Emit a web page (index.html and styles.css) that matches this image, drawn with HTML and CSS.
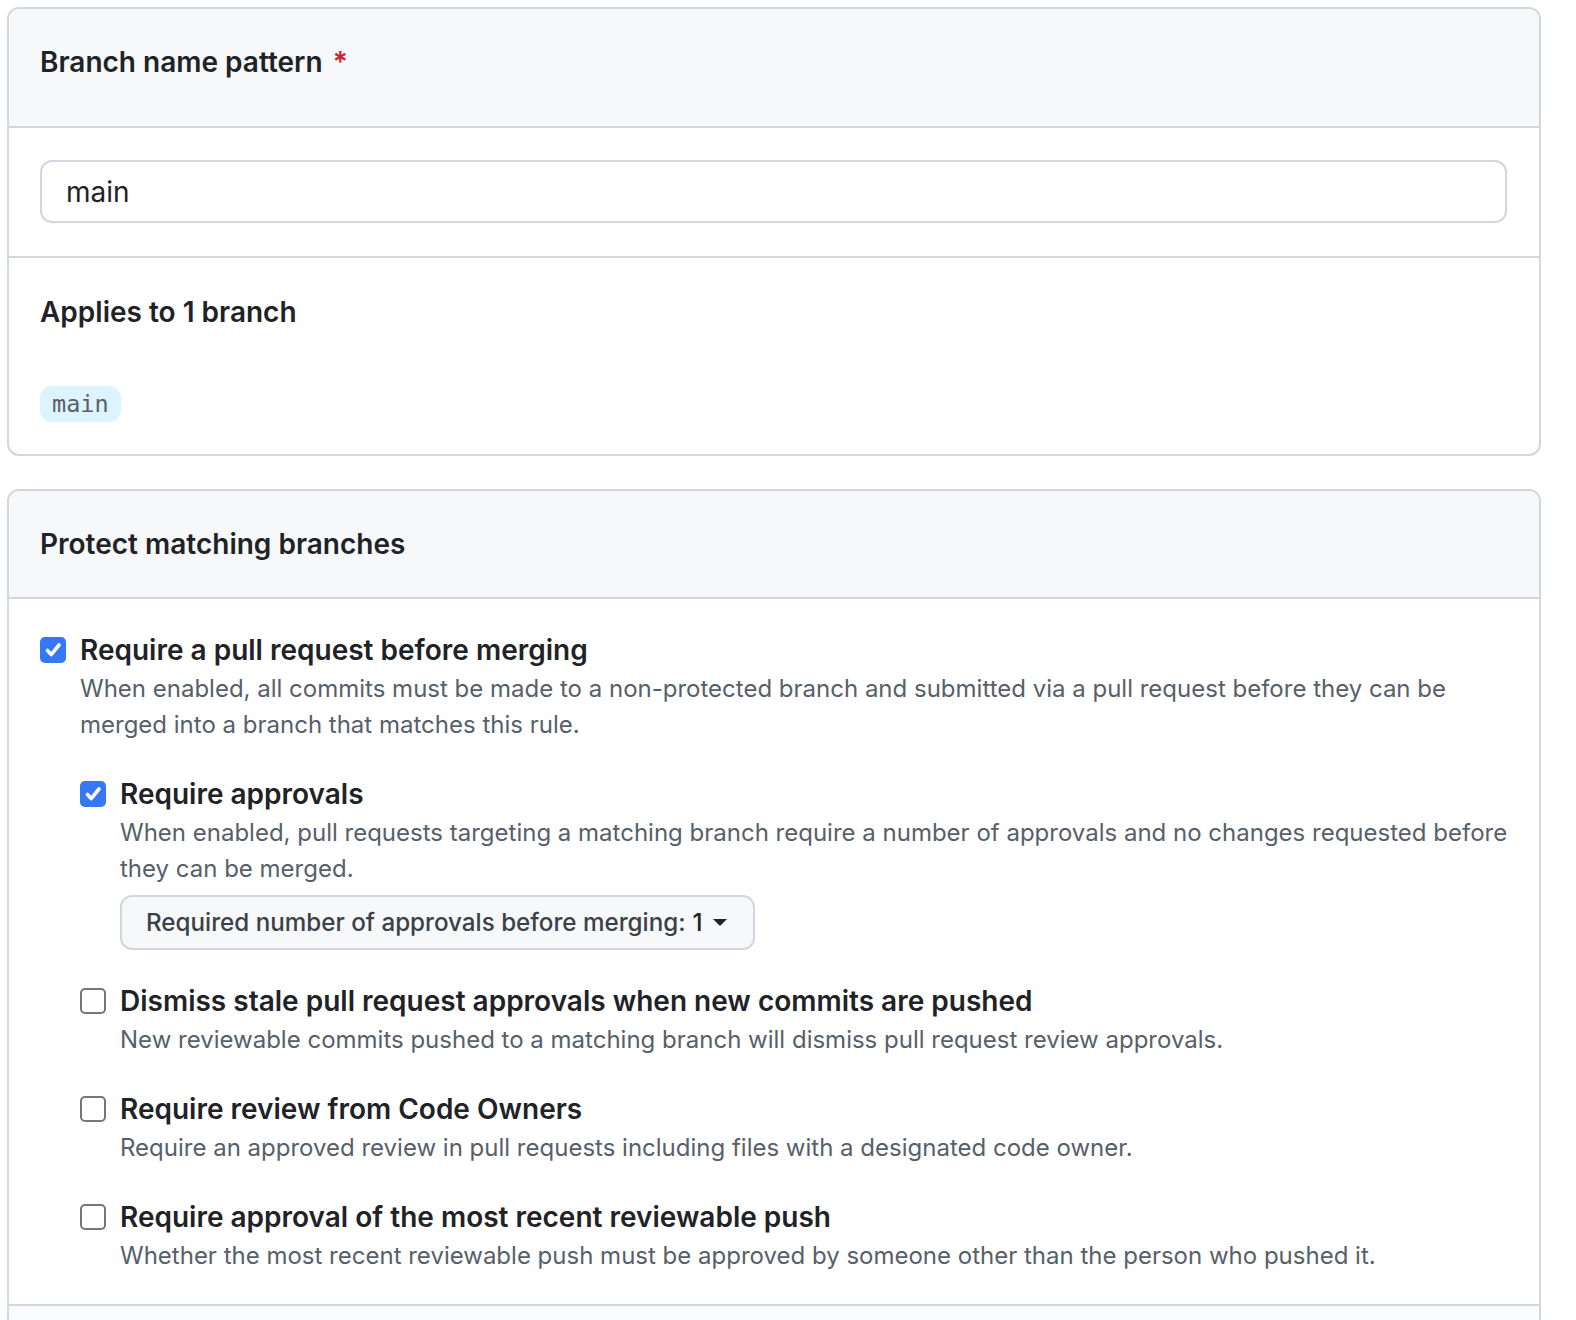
FILE: index.html
```html
<!DOCTYPE html>
<html lang="en">
<head>
<meta charset="utf-8">
<title>Branch protection rule</title>
<link rel="stylesheet" href="styles.css">
</head>
<body>
<div class="page">
  <section class="box">
    <div class="box-header box-header-first">
      <h2 class="box-title">Branch name pattern <span class="required">*</span></h2>
    </div>
    <div class="box-row box-row-input">
      <div class="text-input">main</div>
    </div>
    <div class="box-row box-row-applies">
      <h3 class="box-title">Applies to 1 branch</h3>
      <div class="chips"><span class="branch-chip">main</span></div>
    </div>
  </section>

  <section class="box box-second">
    <div class="box-header">
      <h2 class="box-title">Protect matching branches</h2>
    </div>
    <div class="box-body">
      <div class="option">
        <span class="check checked"><svg viewBox="0 0 26 26" width="26" height="26"><path d="M7.5 13.5 L11.2 17.6 L19 8" fill="none" stroke="#fff" stroke-width="3.6" stroke-linecap="round" stroke-linejoin="round"/></svg></span>
        <div class="option-text">
          <div class="option-title">Require a pull request before merging</div>
          <p class="option-note">When enabled, all commits must be made to a non-protected branch and submitted via a pull request before they can be merged into a branch that matches this rule.</p>
          <div class="sub-options">
            <div class="option">
              <span class="check checked"><svg viewBox="0 0 26 26" width="26" height="26"><path d="M7.5 13.5 L11.2 17.6 L19 8" fill="none" stroke="#fff" stroke-width="3.6" stroke-linecap="round" stroke-linejoin="round"/></svg></span>
              <div class="option-text">
                <div class="option-title">Require approvals</div>
                <p class="option-note">When enabled, pull requests targeting a matching branch require a number of approvals and no changes requested before they can be merged.</p>
                <div class="select-btn">Required number of approvals before merging: <span class="select-value">1</span><span class="caret"></span></div>
              </div>
            </div>
            <div class="option">
              <span class="check"></span>
              <div class="option-text">
                <div class="option-title">Dismiss stale pull request approvals when new commits are pushed</div>
                <p class="option-note">New reviewable commits pushed to a matching branch will dismiss pull request review approvals.</p>
              </div>
            </div>
            <div class="option">
              <span class="check"></span>
              <div class="option-text">
                <div class="option-title">Require review from Code Owners</div>
                <p class="option-note">Require an approved review in pull requests including files with a designated code owner.</p>
              </div>
            </div>
            <div class="option">
              <span class="check"></span>
              <div class="option-text">
                <div class="option-title">Require approval of the most recent reviewable push</div>
                <p class="option-note">Whether the most recent reviewable push must be approved by someone other than the person who pushed it.</p>
              </div>
            </div>
          </div>
        </div>
      </div>
    </div>
    <div class="box-footer"></div>
  </section>
</div>
</body>
</html>
```

FILE: styles.css
```css
* { box-sizing: border-box; }
html, body { margin: 0; padding: 0; background: #ffffff; }
body {
  font-family: Inter, "Noto Sans", "Liberation Sans", sans-serif;
  color: #1f2328;
  height: 1320px;
  overflow: hidden;
}
.page {
  padding: 7px 35px 0 7px;
  display: flex;
  flex-direction: column;
  gap: 33px;
}
.box {
  border: 2px solid #d0d7de;
  border-radius: 12px;
  overflow: hidden;
}
.box-header {
  background: #f6f8fa;
  border-bottom: 2px solid #d0d7de;
  padding: 32px 32px 32px 31px;
}
.box-header-first {
  padding-top: 32px;
  padding-bottom: 43px;
}
.box-title {
  margin: 0;
  font-size: 28px;
  line-height: 42px;
  font-weight: 600;
  color: #1f2328;
}
.required {
  color: #cf222e;
  margin-left: 3px;
}
.box-row {
  padding: 32px 32px 32px 31px;
  border-bottom: 2px solid #d0d7de;
}
.box-row:last-child { border-bottom: 0; }
.box-row-input {
  padding-bottom: 33px;
}
.text-input {
  height: 63px;
  border: 2px solid #d0d7de;
  border-radius: 12px;
  padding: 0 24px;
  display: flex;
  align-items: center;
  font-size: 28px;
  color: #1f2328;
  background: #ffffff;
}
.box-row-applies {
  padding-top: 33px;
  padding-bottom: 32px;
}
.chips {
  margin-top: 53px;
  display: flex;
}
.branch-chip {
  display: inline-flex;
  align-items: center;
  height: 36px;
  padding: 0 12px;
  background: #ddf4ff;
  border-radius: 12px;
  font-family: "DejaVu Sans Mono", "Liberation Mono", monospace;
  font-size: 23.5px;
  color: #57606a;
}
.box-body {
  padding: 30px 24px 30px 31px;
}
.option {
  display: flex;
  align-items: flex-start;
  gap: 14px;
}
.check {
  flex: none;
  width: 26px;
  height: 26px;
  margin-top: 8px;
  border-radius: 5px;
  border: 2px solid #767676;
  background: #ffffff;
  display: flex;
  align-items: center;
  justify-content: center;
}
.check.checked {
  border: 0;
  background: #3478f6;
}
.check svg { display: block; }
.option-text {
  flex: 1;
  min-width: 0;
}
.option-title {
  font-size: 28px;
  line-height: 42px;
  font-weight: 600;
  color: #1f2328;
}
.option-note {
  margin: 0;
  font-size: 24px;
  line-height: 36px;
  color: #57606a;
}
.sub-options {
  margin-top: 30px;
  margin-left: -40px;
  padding-left: 40px;
  display: flex;
  flex-direction: column;
  gap: 30px;
}
.select-btn {
  margin-top: 8px;
  display: inline-flex;
  align-items: center;
  height: 55px;
  padding: 0 26px 0 24px;
  background: #f6f8fa;
  border: 2px solid #d0d7de;
  border-radius: 12px;
  font-size: 24.2px;
  font-weight: 500;
  color: #3b4148;
}
.select-value {
  margin-left: 7px;
  color: #1f2328;
}
.caret {
  display: inline-block;
  margin-left: 10px;
  width: 0;
  height: 0;
  border-left: 7px solid transparent;
  border-right: 7px solid transparent;
  border-top: 7px solid #1f2328;
}
.box-footer {
  border-top: 2px solid #d0d7de;
  background: #fafbfc;
  height: 80px;
}
```
